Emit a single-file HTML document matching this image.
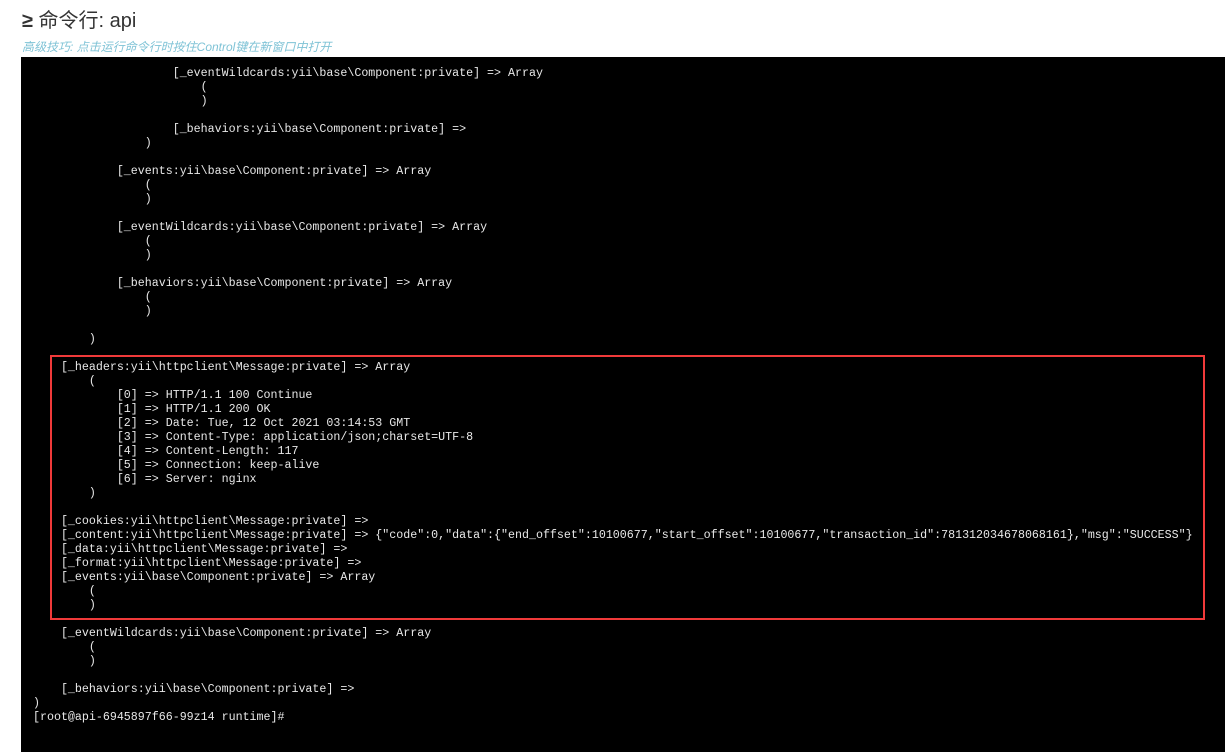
<!DOCTYPE html>
<html><head><meta charset="utf-8"><style>
body{margin:0;width:1225px;height:752px;background:#fff;overflow:hidden;position:relative;font-family:"Liberation Sans","Noto Sans CJK SC",sans-serif}
.title{position:absolute;left:22px;top:4px;font-size:20px;color:#333}
.title b{font-weight:bold}
.tip{position:absolute;left:22px;top:38px;font-size:12px;color:#7fc3d6;font-style:italic}
.term{position:absolute;left:21px;top:57px;width:1204px;height:695px;background:#000}
pre{position:absolute;left:33px;top:67px;margin:0;font-family:"Liberation Mono",monospace;font-size:11.65px;line-height:14px;color:#e8e8e8}
.box{position:absolute;left:50px;top:355px;width:1151px;height:261px;border:2px solid #f03a3a}
</style></head><body>
<div class="title"><b>≥</b> 命令行: api</div>
<div class="tip">高级技巧: 点击运行命令行时按住Control键在新窗口中打开</div>
<div class="term"></div>
<pre>                    [_eventWildcards:yii\base\Component:private] =&gt; Array
                        (
                        )

                    [_behaviors:yii\base\Component:private] =&gt;
                )

            [_events:yii\base\Component:private] =&gt; Array
                (
                )

            [_eventWildcards:yii\base\Component:private] =&gt; Array
                (
                )

            [_behaviors:yii\base\Component:private] =&gt; Array
                (
                )

        )

    [_headers:yii\httpclient\Message:private] =&gt; Array
        (
            [0] =&gt; HTTP/1.1 100 Continue
            [1] =&gt; HTTP/1.1 200 OK
            [2] =&gt; Date: Tue, 12 Oct 2021 03:14:53 GMT
            [3] =&gt; Content-Type: application/json;charset=UTF-8
            [4] =&gt; Content-Length: 117
            [5] =&gt; Connection: keep-alive
            [6] =&gt; Server: nginx
        )

    [_cookies:yii\httpclient\Message:private] =&gt;
    [_content:yii\httpclient\Message:private] =&gt; {"code":0,"data":{"end_offset":10100677,"start_offset":10100677,"transaction_id":781312034678068161},"msg":"SUCCESS"}
    [_data:yii\httpclient\Message:private] =&gt;
    [_format:yii\httpclient\Message:private] =&gt;
    [_events:yii\base\Component:private] =&gt; Array
        (
        )

    [_eventWildcards:yii\base\Component:private] =&gt; Array
        (
        )

    [_behaviors:yii\base\Component:private] =&gt;
)
[root@api-6945897f66-99z14 runtime]#</pre>
<div class="box"></div>
</body></html>
